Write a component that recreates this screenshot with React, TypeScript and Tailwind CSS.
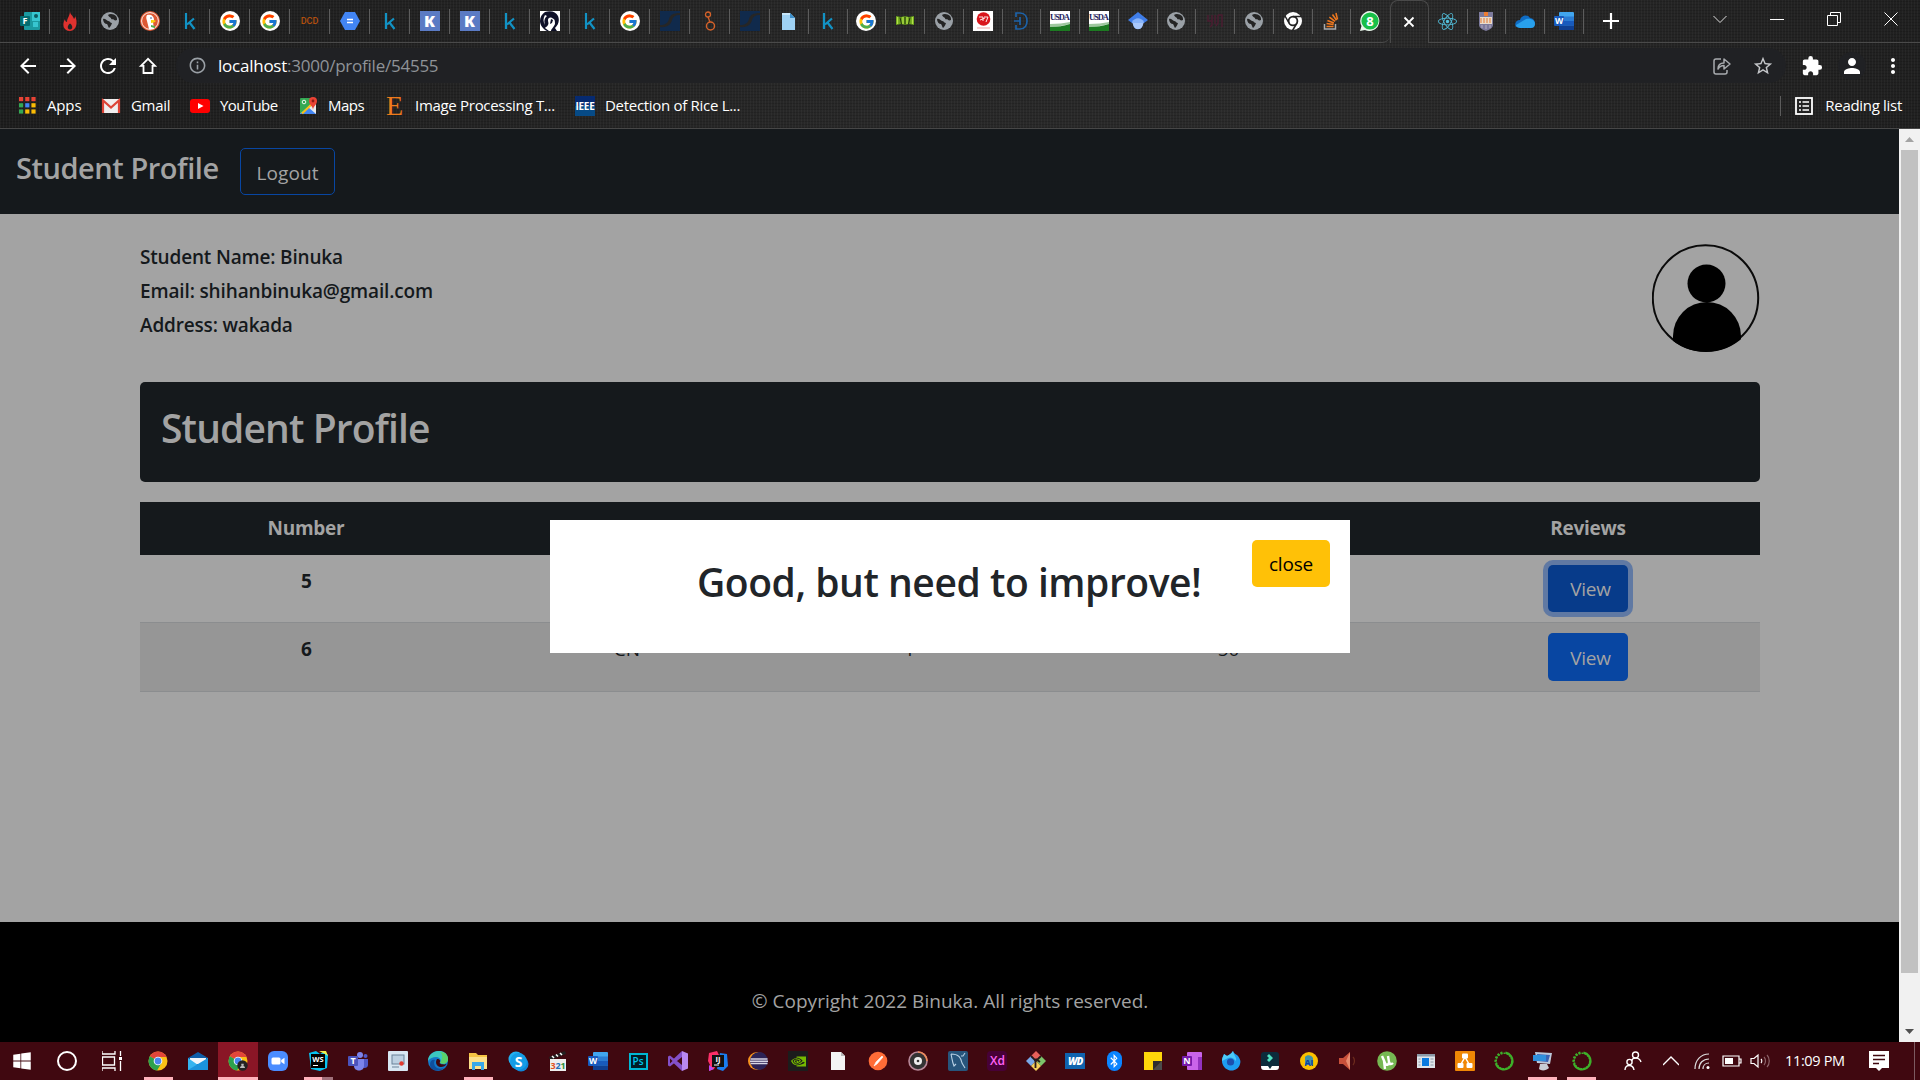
import React from "react";
import { FcGoogle } from "react-icons/fc";
import { FaWindows, FaReact, FaBluetoothB, FaSkype } from "react-icons/fa";
import { SiNvidia } from "react-icons/si";
import {
  MdArrowBack,
  MdArrowForward,
  MdRefresh,
  MdInfoOutline,
  MdStarBorder,
  MdExtension,
  MdPerson,
  MdMoreVert,
} from "react-icons/md";

type Glyph = () => React.ReactElement;

const Svg = ({ children, size = 20, box = 20 }: { children: React.ReactNode; size?: number; box?: number }) => (
  <svg width={size} height={size} viewBox={`0 0 ${box} ${box}`} fill="none" className="block shrink-0">
    {children}
  </svg>
);

/* ---------- tab favicons ---------- */

const FormsIcon: Glyph = () => (
  <Svg>
    <rect x="4" y="1" width="16" height="18" rx="1" fill="#1b9aa0" />
    <rect x="12" y="1" width="8" height="9" fill="#37c6d0" />
    <circle cx="16" cy="5" r="2" fill="#0b5a60" />
    <rect x="13" y="11" width="5" height="5" fill="#37c6d0" />
    <rect x="0" y="5" width="10" height="10" rx="1" fill="#036c70" />
    <text x="5" y="13" fontSize="9" fontWeight="700" fill="#fff" textAnchor="middle">F</text>
  </Svg>
);
const FlameIcon: Glyph = () => (
  <Svg>
    <path d="M10 0c0 4 3 4 4 8 1-1 1-2 1-3 3 5 2 15-5 15S2 13 5 8c0 2 1 3 2 3 0-4 3-6 3-11z" fill="#e0322f" />
    <path d="M10 18.500c-3 0-3-4 0-6 3 2 3 6 0 6z" fill="#242424" />
  </Svg>
);
const GlobeIcon: Glyph = () => (
  <Svg>
    <circle cx="10" cy="10" r="9" fill="#9aa0a6" />
    <path d="M3 8c2-1 3 1 5 2 2 0 2 2 4 2-1 3-2 4-3 5-1-1-1-3-2-4-2 0-4-2-4-5zM8 4c2-2 6-1 8 1 1 1 1 3 1 4-2 1-3 0-4-1-1 1-2 0-2-1-1-1-2-1-3-3z" fill="#242424" />
  </Svg>
);
const DuckIcon: Glyph = () => (
  <Svg>
    <circle cx="10" cy="10" r="10" fill="#de5833" />
    <circle cx="10" cy="10" r="8.400" fill="none" stroke="#fff" strokeWidth="0.900" />
    <path d="M7 4c4-1 7 1 7 5l-1 2 1 7H9L7 10c-1-3-1-4 0-6z" fill="#fff" />
    <path d="M11 9c2 0 4 0 5 1-1 1-3 2-5 2z" fill="#fdd20a" />
    <path d="M11 14l4 1v2l-4-1z" fill="#4fae4c" />
    <circle cx="11" cy="7" r="0.800" fill="#2d4f8e" />
  </Svg>
);
const KaggleIcon: Glyph = () => (
  <Svg>
    <path d="M6 2v16M14 7.500l-7 6M9.500 11.500l5 6.500" stroke="#1292c4" strokeWidth="2.200" />
  </Svg>
);
const GoogleIcon: Glyph = () => (
  <span className="flex size-5 items-center justify-center rounded-full bg-white">
    <FcGoogle size={17} />
  </span>
);
const DcdIcon: Glyph = () => (
  <span className="font-['Roboto',sans-serif] text-[9px] font-medium leading-5 text-[#b4500e]">DCD</span>
);
const HexIcon: Glyph = () => (
  <Svg>
    <path d="M5 1h10l5 9-5 9H5l-5-9z" fill="#4285f4" />
    <path d="M7 8.500h6M7 11.500h6" stroke="#fff" strokeWidth="1.500" />
  </Svg>
);
const BlueKIcon: Glyph = () => (
  <span className="flex size-5 items-center justify-center bg-[#5b7bc4] font-['Open_Sans',sans-serif] text-[16px] font-extrabold leading-none text-white">
    K
  </span>
);
const FaceIcon: Glyph = () => (
  <Svg>
    <rect width="20" height="20" fill="#fff" />
    <path d="M5 1c6-2 11 0 13 4 2 5 0 9-3 12l2 3h-6c0-2 3-4 4-7 0-3 0-5-3-6-2-1-4 0-4 2s1 3 0 5-3 2-3 3l4 3H7c-4-2-7-6-7-10C0 6 2 3 5 1z" fill="#0e1028" />
    <path d="M11 8l2 1-1 3-2 1z" fill="#0e1028" />
    <path d="M5 4c-2 3-2 7 0 10-1-4-1-6 2-9z" fill="#fff" />
  </Svg>
);
const NavyIcon: Glyph = () => (
  <Svg>
    <rect width="20" height="20" fill="#102a4c" />
    <path d="M0 14c5 0 8-2 9-6 1-4 4-6 11-6v2c-5 0-7 2-8 5-1 5-6 8-12 7z" fill="#262626" />
  </Svg>
);
const NodesIcon: Glyph = () => (
  <Svg>
    <circle cx="8" cy="3.500" r="2.500" stroke="#d4622a" strokeWidth="1.300" />
    <circle cx="10.500" cy="15" r="4" stroke="#d4622a" strokeWidth="1.500" />
    <path d="M8 6l2 5" stroke="#d4622a" strokeWidth="1.300" />
  </Svg>
);
const PageIcon: Glyph = () => (
  <Svg>
    <path d="M3 2h8l5 5v12H3z" fill="#9fd2f4" />
    <path d="M11 2l5 5h-5z" fill="#3c8fcb" />
    <path d="M3 2h8v2H3z" fill="#c7e6fa" />
  </Svg>
);
const BookIcon: Glyph = () => (
  <Svg>
    <path d="M1 5l5 1 4-1 4 1 5-1v9l-5-1-4 1-4-1-5 1z" fill="#6aa31c" />
    <path d="M2.500 6v7M8 6v7M12 6v7M17.500 6v7" stroke="#b5e04a" strokeWidth="1.300" />
    <path d="M5 6.500L6.500 13M10 5.500v8M15 6.500L13.500 13" stroke="#23330e" strokeWidth="1" />
  </Svg>
);
const RedSealIcon: Glyph = () => (
  <Svg>
    <rect width="20" height="20" fill="#fff" />
    <circle cx="10.500" cy="8" r="6.800" fill="#d9151c" />
    <path d="M6 6h4v4M11 6h4l-2 5M7 9l5-2" stroke="#fff" strokeWidth="0.900" />
    <path d="M4 17h13" stroke="#f0b5b5" strokeWidth="1.200" />
  </Svg>
);
const DOutlineIcon: Glyph = () => (
  <Svg>
    <path d="M5 6V2h4c5 0 7 4 7 8s-2 8-7 8H5v-4M3 10h6M9 6v8" stroke="#1c62a8" strokeWidth="1.700" />
  </Svg>
);
const UsdaIcon: Glyph = () => (
  <Svg>
    <rect width="20" height="20" fill="#fff" />
    <text x="10" y="9" fontSize="8.500" fontWeight="700" textAnchor="middle" textLength="20" fill="#27235e" fontFamily="Liberation Serif">USDA</text>
    <path d="M0 13c8 0 14-1 20-2v2c-6 1-12 3-20 3z" fill="#9fc79f" />
    <path d="M0 16c8 0 14-1 20-3v7H0z" fill="#1d7a22" />
  </Svg>
);
const ScholarIcon: Glyph = () => (
  <Svg>
    <path d="M10 1l10 8-4 3H4L0 9z" fill="#3f7de8" />
    <path d="M4 11c3-5 9-5 12 0l-2 5c-2 3-6 3-8 0z" fill="#8ab4f8" />
    <path d="M5 12h10c0 8-10 8-10 0z" fill="#a9c8fb" />
  </Svg>
);
const DarkMarkIcon: Glyph = () => (
  <Svg>
    <path d="M3 4v6h4V4M7 4v10l-2 2M10 4v9M13 4h4v12M13 4v8l-2 3" stroke="#4a1c30" strokeWidth="1.500" />
  </Svg>
);
const ChromeMonoIcon: Glyph = () => (
  <Svg>
    <circle cx="10" cy="10" r="9" fill="#fff" />
    <circle cx="10" cy="10" r="4.400" fill="#fff" stroke="#242424" strokeWidth="1.800" />
    <path d="M10 5.600h8.500M6 12L2 5M14 12l-4.500 7.500" stroke="#242424" strokeWidth="1.500" />
  </Svg>
);
const StackIcon: Glyph = () => (
  <Svg>
    <path d="M3.500 13v5h11v-5" stroke="#a9abad" strokeWidth="1.500" />
    <path d="M5.500 15.500h7M5.600 12.600l7 1M6.400 9.500l6.500 2.500M8.400 6.200l5.600 4.200M11.500 3.500l4 5.800M15 2l1.500 6.500" stroke="#f0781e" strokeWidth="1.500" />
  </Svg>
);
const WhatsAppIcon: Glyph = () => (
  <Svg size={22} box={22}>
    <path d="M11 1a10 10 0 1 1-5 19l-5 1 1.500-5A10 10 0 0 1 11 1z" fill="#e9f7ec" />
    <circle cx="11" cy="11" r="8.600" fill="#18bf49" />
    <text x="11" y="15.500" fontSize="13" fontWeight="700" textAnchor="middle" fill="#fff">8</text>
  </Svg>
);
const ReactIcon: Glyph = () => <FaReact size={19} color="#53c1de" />;
const ShieldIcon: Glyph = () => (
  <Svg>
    <path d="M3 1h14v13c0 3-4 5-7 6-3-1-7-3-7-6z" fill="#7c7a9c" />
    <rect x="4" y="6" width="12" height="7" fill="#e8dccc" />
    <rect x="8" y="1" width="4" height="4" fill="#ee7d32" />
    <path d="M5 7v5M8 7v5M11 7v5M14 7v5" stroke="#e58a4c" strokeWidth="1.200" />
    <path d="M6 14v3M10 14v4M14 14v3" stroke="#b4aec4" strokeWidth="1" />
  </Svg>
);
const OneDriveIcon: Glyph = () => (
  <Svg>
    <path d="M5 9c1-5 8-6 10-2 3 0 5 3 5 5l-9 1-10 3c-2-3 0-7 4-7z" fill="#0f6cc4" />
    <path d="M1 14l10-6c6-1 9 2 9 5 0 2-1 4-4 4H5c-2 0-4-1-4-3z" fill="#28a0ec" />
  </Svg>
);
const WordIcon: Glyph = () => (
  <Svg>
    <rect x="5" y="1" width="15" height="18" rx="1" fill="#41a5ee" />
    <rect x="5" y="5.500" width="15" height="4.500" fill="#2b7cd3" />
    <rect x="5" y="10" width="15" height="4.500" fill="#185abd" />
    <rect x="5" y="14.500" width="15" height="4.500" fill="#103f91" />
    <rect x="0" y="5" width="10" height="10" rx="1" fill="#185abd" />
    <text x="5" y="13" fontSize="8.500" fontWeight="700" fill="#fff" textAnchor="middle">W</text>
  </Svg>
);

const wideTabs: Glyph[] = [
  FormsIcon, FlameIcon, GlobeIcon, DuckIcon, KaggleIcon, GoogleIcon, GoogleIcon, DcdIcon, HexIcon, KaggleIcon,
  BlueKIcon, BlueKIcon, KaggleIcon, FaceIcon, KaggleIcon, GoogleIcon, NavyIcon, NodesIcon, NavyIcon,
];
const narrowTabs: Glyph[] = [
  PageIcon, KaggleIcon, GoogleIcon, BookIcon, GlobeIcon, RedSealIcon, DOutlineIcon, UsdaIcon, UsdaIcon, ScholarIcon,
  GlobeIcon, DarkMarkIcon, GlobeIcon, ChromeMonoIcon, StackIcon, WhatsAppIcon,
];
const afterTabs: Glyph[] = [ReactIcon, ShieldIcon, OneDriveIcon, WordIcon];

const Tab = ({ icon: Icon, wide = false, last = false }: { icon: Glyph; wide?: boolean; last?: boolean }) => (
  <div
    className={`flex h-[43px] shrink-0 items-center ${wide ? "w-10" : "w-[38.75px]"} border-b border-[#4a4a4a] ${last ? "rounded-br-lg" : ""}`}
  >
    <div className="flex flex-1 items-center justify-center">
      <Icon />
    </div>
    <span className={`h-[25px] w-px ${last ? "bg-transparent" : "bg-[#5c5c5c]"}`} />
  </div>
);

const TabStrip = () => (
  <div className="flex h-[43px] items-start">
    <div className="h-[43px] w-2.5 border-b border-[#4a4a4a]" />
    {wideTabs.map((t, i) => <Tab key={i} icon={t} wide />)}
    {narrowTabs.map((t, i) => <Tab key={i} icon={t} last={i === narrowTabs.length - 1} />)}
    <div className="flex h-[43px] w-[38.75px] shrink-0 items-center justify-center rounded-t-lg border border-b-0 border-[#4a4a4a]">
      <Svg size={12} box={12}><path d="M1.500 1.500l9 9M10.500 1.500l-9 9" stroke="#fff" strokeWidth="1.800" /></Svg>
    </div>
    {afterTabs.map((t, i) => <Tab key={i} icon={t} />)}
    <div className="flex h-[43px] flex-1 items-center border-b border-[#4a4a4a] pl-[19px]">
      <Svg size={16} box={16}><path d="M8 0v16M0 8h16" stroke="#fff" strokeWidth="2.200" /></Svg>
      <div className="ml-auto flex items-center gap-[43px] pb-[5px] pr-[22px]">
        <Svg size={14} box={14}><path d="M0.500 4l6.500 6.500L13.500 4" stroke="#ddd" strokeWidth="1" /></Svg>
        <Svg size={14} box={14}><path d="M0 7.500h14" stroke="#fff" /></Svg>
        <Svg size={14} box={14}><path d="M0.500 3.500h10v10H.5zM3.500 3.500V.5h10v10h-3" stroke="#fff" /></Svg>
        <Svg size={14} box={14}><path d="M.5.5l13 13M13.500.5l-13 13" stroke="#fff" /></Svg>
      </div>
    </div>
  </div>
);

const Toolbar = () => (
  <div className="flex h-[45px] items-center pl-4 text-white">
    <div className="flex w-[160px] items-center gap-4">
      <MdArrowBack size={24} />
      <MdArrowForward size={24} />
      <MdRefresh size={24} />
      <Svg size={24} box={24}><path d="M12 4.800l-7 7h2.500V19h9v-7.200H19z" stroke="#fff" strokeWidth="1.800" /></Svg>
    </div>
    <div className="flex h-[35px] w-[1610px] items-center rounded-full bg-[#202124] pl-3 pr-3">
      <MdInfoOutline size={19} color="#9aa0a6" />
      <div className="ml-[11px] font-['Open_Sans','Noto_Sans',sans-serif] text-[17px] tracking-[-0.24px] text-[#8f9398]">
        <span className="text-white">localhost</span>:3000/profile/54555
      </div>
      <div className="ml-auto flex items-center gap-5">
        <Svg>
          <path d="M9 3H4a2 2 0 0 0-2 2v11a2 2 0 0 0 2 2h9a2 2 0 0 0 2-2v-2" stroke="#a8abae" strokeWidth="1.500" />
          <path d="M6 13c0-4 2-6 6-6V3l6 5-6 5V9.500c-3 0-4.500 1-6 3.500z" stroke="#a8abae" strokeWidth="1.500" strokeLinejoin="round" />
        </Svg>
        <MdStarBorder size={22} color="#c4c6c9" />
      </div>
    </div>
    <div className="flex flex-1 items-center justify-between pl-[15px] pr-[15px]">
      <MdExtension size={22} />
      <span className="flex size-7 items-center justify-center rounded-full bg-[#202124]">
        <MdPerson size={24} />
      </span>
      <MdMoreVert size={24} />
    </div>
  </div>
);

const AppsIcon: Glyph = () => (
  <Svg size={17} box={17}>
    {["#e84335", "#e84335", "#e84335", "#34a853", "#4285f4", "#fbbc05", "#34a853", "#fbbc05", "#fbbc05"].map((c, i) => (
      <rect key={i} x={(i % 3) * 6.2} y={Math.floor(i / 3) * 6.2} width="4.200" height="4.200" fill={c} />
    ))}
  </Svg>
);
const GmailIcon: Glyph = () => (
  <Svg>
    <rect x="1" y="3" width="18" height="14" rx="1" fill="#f1eeee" />
    <path d="M2 17V4.500l8 7 8-7V17" stroke="#dd4437" strokeWidth="2.200" />
  </Svg>
);
const YouTubeIcon: Glyph = () => (
  <Svg>
    <rect x="0" y="3" width="20" height="14" rx="3" fill="#f00" />
    <path d="M8 7l5.500 3L8 13z" fill="#fff" />
  </Svg>
);
const MapsIcon: Glyph = () => (
  <Svg>
    <rect x="1" y="2" width="16" height="16" rx="1" fill="#34a853" />
    <path d="M1 18L17 4v14z" fill="#e8eaed" />
    <path d="M9 11l8 7H1z" fill="#4285f4" />
    <path d="M3 17.500L15 6" stroke="#fbc016" strokeWidth="2" />
    <path d="M14 14c0-4-4-5-4-9a4 4 0 0 1 8 0c0 4-4 5-4 9z" fill="#ea4335" />
    <circle cx="14" cy="5" r="1.400" fill="#8c1a13" />
    <circle cx="5" cy="6" r="1.800" stroke="#fff" strokeWidth="0.900" />
  </Svg>
);
const ElsevierIcon: Glyph = () => (
  <span className="w-[17px] text-center font-['Liberation_Serif',serif] text-[28px] leading-5 text-[#ee7b1c]">E</span>
);
const IeeeIcon: Glyph = () => (
  <Svg>
    <rect width="20" height="20" fill="#064a86" />
    <rect width="20" height="10" fill="#062a70" />
    <text x="10" y="14" fontSize="11" fontWeight="700" textAnchor="middle" textLength="19" lengthAdjust="spacingAndGlyphs" fill="#fff">IEEE</text>
  </Svg>
);

const bookmarks: { icon: Glyph; label: string; box: string; text: string }[] = [
  { icon: AppsIcon, label: "Apps", box: "w-[82px] gap-[11px]", text: "tracking-[-0.15px]" },
  { icon: GmailIcon, label: "Gmail", box: "w-[89px] gap-[10px]", text: "tracking-[-0.3px]" },
  { icon: YouTubeIcon, label: "YouTube", box: "w-[109px] gap-[10px]", text: "tracking-[-0.6px]" },
  { icon: MapsIcon, label: "Maps", box: "w-[87px] gap-[9px]", text: "tracking-[-0.5px]" },
  { icon: ElsevierIcon, label: "Image Processing T...", box: "w-[189px] gap-[12px]", text: "tracking-[-0.3px]" },
  { icon: IeeeIcon, label: "Detection of Rice L...", box: "w-[200px] gap-[10px]", text: "tracking-[-0.3px]" },
];

const BookmarksBar = () => (
  <div className="flex h-10 items-center pb-[5px] pl-[19px] font-['Open_Sans','Noto_Sans',sans-serif] text-[15px] text-white">
    {bookmarks.map(({ icon: Icon, label, box, text }) => (
      <div key={label} className={`flex shrink-0 items-center whitespace-nowrap ${box} ${text}`}>
        <Icon />
        <span>{label}</span>
      </div>
    ))}
    <div className="ml-auto flex items-center gap-[11px] pr-[18px]">
      <span className="mr-[2px] h-5 w-px bg-[#5c5c5c]" />
      <Svg>
        <rect x="2" y="2" width="16" height="16" stroke="#fff" strokeWidth="1.800" />
        <path d="M5 6h2M5 10h2M5 14h2M8.500 6H15M8.500 10H15M8.500 14H15" stroke="#fff" strokeWidth="1.700" />
      </Svg>
      <span className="tracking-[-0.3px]">Reading list</span>
    </div>
  </div>
);

const BrowserChrome = () => (
  <div className="h-[129px] border-b border-[#474747] bg-[#1d1d1d] bg-[repeating-linear-gradient(90deg,rgba(255,255,255,0.03)_0_1px,transparent_1px_3px),repeating-linear-gradient(0deg,rgba(0,0,0,0.14)_0_1px,transparent_1px_3px),linear-gradient(90deg,#1d1d1d,#282828_45%,#2a2a2a_70%,#202020)]">
    <TabStrip />
    <Toolbar />
    <BookmarksBar />
  </div>
);

/* ---------- page ---------- */

const Avatar = () => (
  <svg width="108" height="108" viewBox="0 0 108 108" className="block">
    <defs>
      <clipPath id="ring"><circle cx="54" cy="54" r="54" /></clipPath>
    </defs>
    <circle cx="53.500" cy="54" r="52.700" fill="none" stroke="#0a0a0a" strokeWidth="2" />
    <circle cx="54.500" cy="39.500" r="19" fill="#000" />
    <path d="M21 108V92a34 34 0 0 1 68 0v16z" fill="#000" clipPath="url(#ring)" />
  </svg>
);

const columns = ["Number", "", "", "", "Reviews"];
const rows = [
  { cells: ["5", "", "", ""], active: true },
  { cells: ["6", "CN", "1", "50"], active: false },
];

const ResultsTable = () => (
  <div className="mt-5 text-center">
    <div className="grid h-[53px] grid-cols-[332px_310px_255px_379px_344px] items-center bg-[#15191c] font-bold text-[#a3a3a3]">
      {columns.map((c, i) => <span key={i} className="tracking-[-0.27px]">{c}</span>)}
    </div>
    {rows.map(({ cells, active }, i) => (
      <div
        key={i}
        className={`grid grid-cols-[332px_310px_255px_379px_344px] border-b border-[#8b8d8f] pt-[10px] ${active ? "h-[68px]" : "h-[69px] bg-[#969696]"}`}
      >
        {cells.map((c, j) => (
          <span key={j} className={`leading-8 ${j === 0 ? "pl-px font-bold" : ""} ${j === 3 ? "pl-1" : ""}`}>{c}</span>
        ))}
        <span className="flex justify-center">
          <button
            className={`w-20 rounded-[5px] pl-[5px] text-[#a3a3a3] tracking-[-0.3px] ${active ? "h-[47px] bg-[#073b8a] pt-px shadow-[0_0_0_5px_#6079a3]" : "h-12 bg-[#0846a2] pt-0.5"}`}
          >
            View
          </button>
        </span>
      </div>
    ))}
  </div>
);

const ReviewModal = () => (
  <div className="absolute left-[550px] top-[391px] flex h-[133px] w-[800px] items-start bg-white p-5">
    <h1 className="ml-[127px] mt-[18px] flex-1 whitespace-nowrap text-[39px] font-semibold leading-[48px] tracking-[-0.45px] text-[#212529]">
      Good, but need to improve!
    </h1>
    <button className="h-[47px] w-[78px] rounded-[5px] bg-[#ffc107] pt-px text-black tracking-[-0.2px]">close</button>
  </div>
);

const Scrollbar = () => (
  <div className="flex w-[21px] flex-col items-center bg-[#f1f1f1]">
    <div className="flex h-[21px] items-center justify-center">
      <Svg size={9} box={9}><path d="M0 7h9L4.500 2z" fill="#a3a3a3" /></Svg>
    </div>
    <div className="h-[823px] w-[17px] bg-[#c1c1c1]" />
    <div className="mt-auto flex h-[21px] items-center justify-center">
      <Svg size={9} box={9}><path d="M0 2h9L4.500 7z" fill="#505050" /></Svg>
    </div>
  </div>
);

const Page = () => (
  <div className="flex h-[913px]">
    <main className="relative flex w-[1899px] flex-col bg-[#a3a3a3] font-['Open_Sans','Noto_Sans',sans-serif] text-[19px] text-[#15191c]">
      <header className="flex h-[85px] items-start bg-[#15191c] pl-4 pt-[19px] text-[#a3a3a3]">
        <h4 className="w-[224px] whitespace-nowrap text-[29px] font-semibold leading-[40px] tracking-[-0.45px]">Student Profile</h4>
        <button className="h-[47px] w-[95px] rounded-[5px] border border-[#0846a2] pt-[3px] tracking-[0.1px]">Logout</button>
      </header>
      <div className="mx-[140px] w-[1620px]">
        <section className="flex h-[168px] items-start justify-between pt-[26px]">
          <div className="font-semibold leading-[34px] tracking-[-0.17px]">
            <p>Student Name: Binuka</p>
            <p className="tracking-[-0.14px]">Email: shihanbinuka@gmail.com</p>
            <p>Address: wakada</p>
          </div>
          <div className="mt-1"><Avatar /></div>
        </section>
        <section className="h-[100px] rounded-[5px] bg-[#15191c] pl-[21px] pt-[22px]">
          <h1 className="text-[39px] font-semibold leading-[48px] tracking-[-0.87px] text-[#a3a3a3]">Student Profile</h1>
        </section>
        <ResultsTable />
      </div>
      <footer className="mt-auto flex h-[120px] justify-center bg-black pl-px pt-[64px] leading-[30px] text-[#a3a3a3] tracking-[0.03px]">
        © Copyright 2022 Binuka. All rights reserved.
      </footer>
      <ReviewModal />
    </main>
    <Scrollbar />
  </div>
);

/* ---------- taskbar ---------- */

const ChromeIcon = ({ badge = false }: { badge?: boolean }) => (
  <Svg>
    <circle cx="10" cy="10" r="9.500" fill="#fbc116" />
    <path d="M10 10L1.770 5.250A9.500 9.500 0 0 1 18.230 5.250L18.500 6H10z" fill="#e2453a" />
    <path d="M10 10L1.770 5.250A9.500 9.500 0 0 0 9 19.500L13.500 12z" fill="#2da14e" />
    <circle cx="10" cy="10" r="4.300" fill="#fff" />
    <circle cx="10" cy="10" r="3.400" fill="#4a86ee" />
    {badge && <circle cx="14.500" cy="14.500" r="5.200" fill="#222" />}
    {badge && <path d="M12 17c0-3 5-3 5 0zM13.300 12.800h2.400v2h-2.400z" fill="#bbb" />}
  </Svg>
);
const Chrome1: Glyph = () => <ChromeIcon />;
const Chrome2: Glyph = () => <ChromeIcon badge />;
const MailIcon: Glyph = () => (
  <Svg>
    <path d="M0 7l10-6 10 6v12H0z" fill="#0f5ea8" />
    <path d="M2 7h16v6H2z" fill="#f2f6fa" />
    <path d="M0 7l10 7 10-7v12H0z" fill="#35b4f0" />
    <path d="M0 19L20 7v12z" fill="#1b93dc" />
  </Svg>
);
const ZoomIcon: Glyph = () => (
  <Svg>
    <rect width="20" height="20" rx="6" fill="#4a8cff" />
    <rect x="3.500" y="6.500" width="9" height="7" rx="1.500" fill="#fff" />
    <path d="M13.200 9l3.300-2.300v6.600L13.200 11z" fill="#fff" />
  </Svg>
);
const WebStormIcon: Glyph = () => (
  <Svg>
    <path d="M1 2l7-2 4 3 5-3 3 4-1 13-7 3-9-2z" fill="#07c3f2" />
    <path d="M11 0h7l2 5-3-2z" fill="#f4f04a" />
    <rect x="3" y="3" width="14" height="14" fill="#000" />
    <text x="10" y="10.500" fontSize="7.500" fontWeight="700" fill="#fff" textAnchor="middle">WS</text>
    <path d="M5 14.500h5" stroke="#fff" />
  </Svg>
);
const TeamsIcon: Glyph = () => (
  <Svg>
    <circle cx="12" cy="4" r="3" fill="#7b83eb" />
    <circle cx="17.500" cy="5" r="2" fill="#5059c9" />
    <path d="M14 8h6v6c0 3-4 4-6 2z" fill="#5059c9" />
    <path d="M6 8h10v7c0 6-10 6-10 0z" fill="#7b83eb" />
    <rect x="0" y="5" width="10" height="10" rx="1" fill="#4b53bc" />
    <text x="5" y="13" fontSize="9" fontWeight="700" fill="#fff" textAnchor="middle">T</text>
  </Svg>
);
const RecorderIcon: Glyph = () => (
  <Svg>
    <rect width="20" height="20" rx="1" fill="#d8e6f2" />
    <rect x="4" y="4" width="12" height="9" fill="#bcd0e2" stroke="#6b8299" />
    <path d="M4 16h7" stroke="#6b8299" />
    <circle cx="13.500" cy="12.500" r="2.200" fill="#e13b30" />
  </Svg>
);
const EdgeIcon: Glyph = () => (
  <Svg>
    <circle cx="10" cy="10" r="10" fill="#1478c8" />
    <path d="M0 10C0-2 20-4 20 8c0 4-4 6-8 4 2-4-1-6-4-6S2 7 0 10z" fill="#3cc7c0" />
    <path d="M12 1c6 0 8 4 8 7 0 4-4 6-8 4 2-4 4-7 0-11z" fill="#5ad26a" />
    <path d="M7 9c-3 5 2 11 9 8-4 4-13 4-14-3 0-4 2-6 5-5z" fill="#0f4f9e" />
    <path d="M9 8c3 0 4 2 2.500 4 2 2 6 1.500 7 1-1 2-4 3.500-6.500 3C8 15 7 11 9 8z" fill="#400810" />
  </Svg>
);
const FolderIcon: Glyph = () => (
  <Svg>
    <path d="M1 2h7l2 2h9v14H1z" fill="#f6c444" />
    <path d="M1 6h18v12H1z" fill="#fde08a" />
    <path d="M4 19v-8h12v8h-3v-4H7v4z" fill="#38a7e8" />
  </Svg>
);
const SkypeIcon: Glyph = () => (
  <span className="flex size-[21px] items-center justify-center">
    <Svg size={21} box={21}>
      <circle cx="8" cy="8" r="7.500" fill="#22b0f0" />
      <circle cx="13" cy="13" r="7.500" fill="#0f86d8" />
      <circle cx="10.500" cy="10.500" r="8.500" fill="#149ce6" />
      <text x="10.500" y="15.500" fontSize="14" fontWeight="700" fill="#fff" textAnchor="middle">S</text>
    </Svg>
  </span>
);
const ClapperIcon: Glyph = () => (
  <Svg>
    <path d="M1 6l16-6 1 3L2 9z" fill="#222" />
    <path d="M4 5l2 2M8 3.500l2 2M12 2l2 2" stroke="#fff" strokeWidth="1.500" />
    <rect x="2" y="8" width="16" height="12" fill="#eee" />
    <text x="5" y="18" fontSize="9" fontWeight="700" fill="#e0531f" textAnchor="middle">3</text>
    <text x="10" y="18" fontSize="9" fontWeight="700" fill="#2370b8" textAnchor="middle">2</text>
    <text x="15" y="18" fontSize="9" fontWeight="700" fill="#2f9038" textAnchor="middle">1</text>
  </Svg>
);
const PhotoshopIcon: Glyph = () => (
  <span className="flex h-[17px] w-[19px] items-center justify-center border-2 border-[#00b8d4] bg-[#001d26] font-['Open_Sans',sans-serif] text-[10px] font-semibold leading-none text-[#00c8ee]">
    Ps
  </span>
);
const VisualStudioIcon: Glyph = () => (
  <Svg>
    <path d="M14 0l6 2.500v15L14 20z" fill="#b888f0" />
    <path d="M14 0v6L2 15.500 0 14.500v-9l2-1L14 14v6L6 12.500 2.500 10 6 7.500z" fill="#8350c8" />
    <path d="M2 7.500v5L4.500 10z" fill="#400810" />
  </Svg>
);
const IntelliJIcon: Glyph = () => (
  <Svg>
    <path d="M1 2l8-2 3 6-6 12-5 2 1-6-2-4z" fill="#fc2f68" />
    <path d="M12 2l7 1 1 12-5 5-6-2z" fill="#1a7df0" />
    <path d="M1 14l5 4-5 2z" fill="#b74af7" />
    <rect x="4" y="4" width="12" height="12" fill="#111" />
    <text x="10" y="11" fontSize="7.500" fontWeight="700" fill="#fff" textAnchor="middle">IJ</text>
    <path d="M6 14h5" stroke="#fff" />
  </Svg>
);
const EclipseIcon: Glyph = () => (
  <Svg>
    <circle cx="9" cy="10" r="9" fill="#f7941e" />
    <circle cx="11" cy="10" r="9" fill="#2c2255" />
    <path d="M2.500 8h17M2 10.200h18M2.500 12.500h17" stroke="#d6d4e4" strokeWidth="1.500" />
  </Svg>
);
const NvidiaIcon: Glyph = () => (
  <span className="flex size-5 items-center justify-center bg-[#1c1c1c]"><SiNvidia size={15} color="#76b900" /></span>
);
const BlankFileIcon: Glyph = () => (
  <Svg>
    <path d="M3 1h10l4 4v14H3z" fill="#f4f4f4" />
    <path d="M13 1l4 4h-4z" fill="#b9b9b9" />
  </Svg>
);
const PostmanIcon: Glyph = () => (
  <Svg>
    <circle cx="10" cy="10" r="9.300" fill="#ff6c37" />
    <path d="M6 15l2-4 6-6 1 1-6 7z" fill="#fff" stroke="#fff" strokeWidth="0.600" />
  </Svg>
);
const VinylIcon: Glyph = () => (
  <Svg>
    <circle cx="10" cy="10" r="9" fill="#333" stroke="#b8899a" strokeWidth="1.600" />
    <path d="M10 1a9 9 0 0 1 9 9" stroke="#ef8a5a" strokeWidth="1.600" />
    <circle cx="10" cy="10" r="4" fill="#eee" />
    <circle cx="10" cy="10" r="1.300" fill="#333" />
  </Svg>
);
const MySqlIcon: Glyph = () => (
  <Svg>
    <rect width="20" height="20" rx="2" fill="#27557c" />
    <path d="M3 3c1 4 1 7 3 12l2-2M3 3c8 0 10 4 11 9l3 5M13 5l2 0 2-3" stroke="#b8d0e4" strokeWidth="1.100" />
  </Svg>
);
const XdIcon: Glyph = () => (
  <span className="flex size-5 items-center justify-center rounded-sm bg-[#470137] font-['Open_Sans',sans-serif] text-[12px] font-semibold leading-none text-[#ff61f6]">
    Xd
  </span>
);
const GitIcon: Glyph = () => (
  <Svg>
    <path d="M10 0l5 5-5 5-5-5z" fill="#e8605a" />
    <path d="M5 5l5 5-5 5-5-5z" fill="#79a8e8" />
    <path d="M15 5l5 5-5 5-5-5z" fill="#7cc46a" />
    <path d="M10 10l5 5-5 5-5-5z" fill="#f4cf5a" />
    <path d="M5 5l4.500 4.500V17M10 8l4 3M15 5l-5 5" stroke="#2a1a1a" strokeWidth="1.800" />
    <circle cx="9.500" cy="9" r="1.500" fill="#2a1a1a" />
  </Svg>
);
const WdIcon: Glyph = () => (
  <span className="flex h-4 w-5 items-center justify-center bg-[#0f63ae] font-['Open_Sans',sans-serif] text-[10px] font-extrabold italic leading-none tracking-[-0.8px] text-white">
    WD
  </span>
);
const BluetoothIcon: Glyph = () => (
  <span className="flex h-5 w-[15px] items-center justify-center rounded-full bg-[#0a84ff] text-white"><FaBluetoothB size={14} /></span>
);
const StickyIcon: Glyph = () => (
  <Svg>
    <path d="M1 1h18v9l-9 9H1z" fill="#ffd60a" />
    <path d="M19 10v9h-9z" fill="#4b4b4b" />
    <path d="M10 10h9l-9 9z" fill="#2e2e2e" />
  </Svg>
);
const OneNoteIcon: Glyph = () => (
  <Svg>
    <rect x="5" y="1" width="15" height="18" rx="1" fill="#ca64ea" />
    <path d="M16 6h4v13h-4z" fill="#9332bf" />
    <rect x="0" y="5" width="10" height="10" rx="1" fill="#7719aa" />
    <text x="5" y="13" fontSize="9" fontWeight="700" fill="#fff" textAnchor="middle">N</text>
  </Svg>
);
const FirefoxIcon: Glyph = () => (
  <Svg>
    <path d="M1 11C1 7 2 5 3 3l3 2c2-1 4-2 6-5 1 3 3 3 5 5 2 3 3 5 2 8-2 9-16 9-18-2z" fill="#1e9cf0" />
    <path d="M1 10C1 6 3 5 3 3l3 2c2-1 4-2 6-5 1 5 4 6 3 10-3-4-6-4-8-3z" fill="#4dcbf8" />
    <circle cx="9.500" cy="11" r="3.600" fill="#1c4fae" />
  </Svg>
);
const FilmoraIcon: Glyph = () => (
  <Svg>
    <rect x="1" y="1" width="18" height="18" rx="3" fill="#0c2c3c" />
    <path d="M9 3l4 4-4 4-2-2 2-2-2-2z" fill="#50e3c2" />
    <path d="M1 15h18c0 3-1 4-3 4H4c-2 0-3-1-3-4z" fill="#fff" />
    <path d="M8 15h4l-2 3z" fill="#0c2c3c" />
  </Svg>
);
const AndroidAiIcon: Glyph = () => (
  <Svg>
    <circle cx="10" cy="10" r="9" fill="#fbc000" />
    <path d="M6 6c2-3 7-2 8 1v7H6z" fill="#3f93a8" />
    <text x="10" y="15" fontSize="9" fontWeight="700" fill="#0c3f9e" textAnchor="middle">AI</text>
  </Svg>
);
const SpeakerIcon: Glyph = () => (
  <Svg>
    <path d="M1 7h4l7-6v18l-7-6H1z" fill="#c8503a" />
    <path d="M12 1v18l-4-9z" fill="#e88c70" />
    <path d="M15 6c2 2 2 6 0 8" stroke="#6b2a1c" strokeWidth="1.300" />
  </Svg>
);
const TorrentIcon: Glyph = () => (
  <Svg>
    <circle cx="10" cy="10" r="9.800" fill="#76b852" />
    <path d="M5 5l3 7c1 3 4 2 4-1l-1-6M12 11c1 3 3 2 4 1M7 10l1 8" stroke="#fff" strokeWidth="2.400" />
  </Svg>
);
const WindowIcon: Glyph = () => (
  <Svg>
    <rect x="1" y="3" width="18" height="14" fill="#dfe5ea" />
    <rect x="1" y="3" width="18" height="2.500" fill="#8c9aa8" />
    <rect x="6" y="7" width="7" height="8" fill="#0a7ae0" />
    <path d="M2.500 8h2M2.500 11h2M2.500 14h2M14.500 8h3M14.500 11h3M14.500 14h3" stroke="#8c9aa8" />
  </Svg>
);
const DrawIoIcon: Glyph = () => (
  <Svg>
    <rect width="20" height="20" rx="1" fill="#f08705" />
    <path d="M10 6L5.500 14M10 6l4.500 8" stroke="#fff" strokeWidth="1.500" />
    <rect x="7" y="2.500" width="6" height="5" rx="1" fill="#fff" />
    <rect x="2.500" y="12" width="6" height="5" rx="1" fill="#fff" />
    <rect x="11.500" y="12" width="6" height="5" rx="1" fill="#fff" />
  </Svg>
);
const AnacondaIcon: Glyph = () => (
  <Svg>
    <circle cx="10" cy="10" r="8.500" stroke="#3eb02a" strokeWidth="2.200" strokeDasharray="36 1.500 2 1.500 2 1.500 2 1.500 2 20" transform="rotate(-80 10 10)" />
    <circle cx="10" cy="10" r="7.800" stroke="#3eb02a" strokeWidth="1.600" strokeDasharray="2 1" />
  </Svg>
);
const ComputerIcon: Glyph = () => (
  <Svg>
    <path d="M2 1l17 1-2 11-13-1z" fill="#bcc8da" />
    <path d="M4 3l13 1-2 7-10-1z" fill="#3b62b4" />
    <path d="M0 4h13v6H0z" fill="#2f8fdc" />
    <path d="M7 13h7l2 4c-3 3-8 3-10 1z" fill="#c9cdd6" />
  </Svg>
);

const pinned: { icon: Glyph; state?: string }[] = [
  { icon: Chrome1, state: "open" }, { icon: MailIcon }, { icon: Chrome2, state: "active" }, { icon: ZoomIcon },
  { icon: WebStormIcon, state: "stacked" }, { icon: TeamsIcon }, { icon: RecorderIcon }, { icon: EdgeIcon },
  { icon: FolderIcon, state: "open" }, { icon: SkypeIcon }, { icon: ClapperIcon }, { icon: WordIcon },
  { icon: PhotoshopIcon }, { icon: VisualStudioIcon }, { icon: IntelliJIcon }, { icon: EclipseIcon },
  { icon: NvidiaIcon }, { icon: BlankFileIcon }, { icon: PostmanIcon }, { icon: VinylIcon }, { icon: MySqlIcon },
];
const pinnedNarrow: { icon: Glyph; state?: string }[] = [
  { icon: XdIcon }, { icon: GitIcon }, { icon: WdIcon }, { icon: BluetoothIcon }, { icon: StickyIcon },
  { icon: OneNoteIcon }, { icon: FirefoxIcon }, { icon: FilmoraIcon }, { icon: AndroidAiIcon }, { icon: SpeakerIcon },
  { icon: TorrentIcon }, { icon: WindowIcon }, { icon: DrawIoIcon }, { icon: AnacondaIcon },
  { icon: ComputerIcon, state: "open" }, { icon: AnacondaIcon, state: "open" },
];

const TaskItem = ({ icon: Icon, state, narrow = false }: { icon: Glyph; state?: string; narrow?: boolean }) => (
  <div className={`flex h-[38px] shrink-0 flex-col items-center ${narrow ? "w-[38.95px]" : "w-10"} ${state === "active" ? "bg-[#8a1626]" : ""}`}>
    <div className="flex h-[35px] items-center justify-center pt-[3px]"><Icon /></div>
    {state === "open" && <span className="h-[3px] w-[29px] bg-[#ffb3bc]" />}
    {state === "active" && <span className="h-[3px] w-full bg-[#ffb3bc]" />}
    {state === "stacked" && (
      <span className="flex h-[3px] w-[29px]"><i className="w-[18px] bg-[#ffb3bc]" /><i className="flex-1 bg-[#a0707a]" /></span>
    )}
  </div>
);

const Taskbar = () => (
  <div className="flex h-[38px] bg-[#400810] text-white">
    <div className="flex w-[138px] items-center pl-3">
      <FaWindows size={20} />
      <span className="ml-[25px] size-[20px] rounded-full border-[2.5px] border-white" />
      <div className="ml-[25px]">
        <Svg>
          <path d="M0 0v3h13V0M0 20v-3h13v3M.5 6h12v8H.5zM18.500 0v5M18.500 10v10" stroke="#fff" strokeWidth="1.300" />
          <rect x="17" y="6" width="3" height="3" fill="#fff" />
        </Svg>
      </div>
    </div>
    {pinned.map((p, i) => <TaskItem key={i} icon={p.icon} state={p.state} />)}
    {pinnedNarrow.map((p, i) => <TaskItem key={i} icon={p.icon} state={p.state} narrow />)}
    <div className="flex flex-1 items-center pl-[22px]">
      <Svg>
        <circle cx="12.500" cy="4" r="3" stroke="#fff" strokeWidth="1.400" />
        <path d="M8.500 10c1-4 8-4 9.500 1" stroke="#fff" strokeWidth="1.400" />
        <circle cx="6.500" cy="11" r="2.600" stroke="#fff" strokeWidth="1.400" />
        <path d="M2 19c0-6 8-6 9 0" stroke="#fff" strokeWidth="1.400" />
      </Svg>
      <div className="ml-5"><Svg size={16} box={16}><path d="M0 12l8-8 8 8" stroke="#fff" strokeWidth="1.300" /></Svg></div>
      <div className="ml-[15px]">
        <Svg size={16} box={16}>
          <path d="M1 16C1 7 7 1 15 1M5 16c0-6 4-10 10-10M9 16c0-3 2-6 6-6" stroke="#ddd" strokeWidth="1.200" />
          <circle cx="14" cy="14.500" r="1.500" fill="#fff" />
        </Svg>
      </div>
      <div className="ml-3">
        <Svg>
          <path d="M1 5h16v10H1zM17 8h2v4h-2" stroke="#fff" strokeWidth="1.200" />
          <rect x="3" y="7" width="8" height="6" fill="#fff" />
        </Svg>
      </div>
      <div className="ml-2">
        <Svg>
          <path d="M1 7.500h3L8 4v12l-4-3.500H1z" stroke="#fff" strokeWidth="1.200" />
          <path d="M11 8c1 1 1 3 0 4" stroke="#fff" strokeWidth="1.200" />
          <path d="M14 6c2 2 2 6 0 8M17 4c3 3 3 9 0 12" stroke="#8b6268" strokeWidth="1.200" />
        </Svg>
      </div>
      <span className="ml-[15px] w-[61px] whitespace-nowrap font-['Open_Sans','Noto_Sans',sans-serif] text-[14.5px] tracking-[-0.35px]">11:09 PM</span>
      <div className="ml-[23px]">
        <Svg>
          <path d="M0 0h20v17h-7l-3 3-3-3H0z" fill="#fff" />
          <path d="M4 4.500h12M4 8.500h12M4 12.500h6" stroke="#400810" strokeWidth="1.400" />
        </Svg>
      </div>
      <span className="ml-auto mr-[5px] h-full w-px bg-[#7c5a60]" />
    </div>
  </div>
);

export default function App() {
  return (
    <div className="h-[1080px] w-[1920px] overflow-hidden font-['Open_Sans','Noto_Sans',sans-serif]">
      <BrowserChrome />
      <Page />
      <Taskbar />
    </div>
  );
}
